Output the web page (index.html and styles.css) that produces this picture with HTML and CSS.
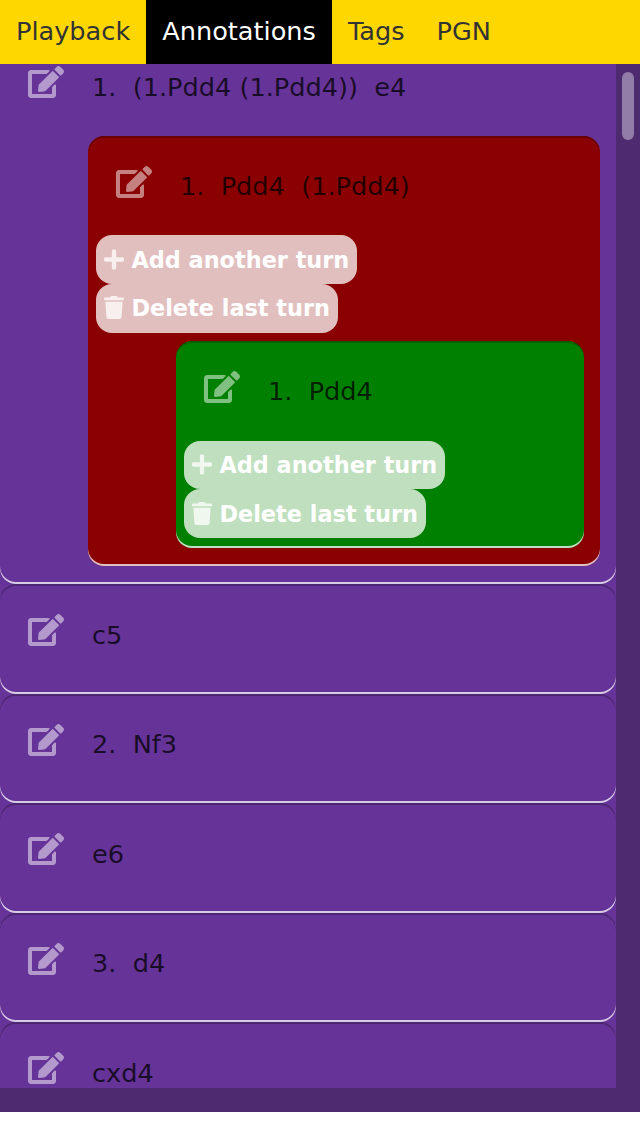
FILE: index.html
```
<!DOCTYPE html>
<html lang="en">
<head>
<meta charset="utf-8">
<title>Annotations</title>
<link rel="stylesheet" href="styles.css">
</head>
<body>
<svg class="defs" aria-hidden="true">
  <symbol id="edit" viewBox="0 0 576 512"><path d="M402.6 83.2l90.2 90.2c3.8 3.8 3.8 10 0 13.8L274.4 405.6l-92.8 10.3c-12.4 1.4-22.9-9.1-21.5-21.5l10.3-92.8L388.8 83.2c3.8-3.8 10-3.8 13.8 0zm162-22.9l-48.8-48.8c-15.2-15.2-39.9-15.2-55.2 0l-35.4 35.4c-3.8 3.8-3.8 10 0 13.8l90.2 90.2c3.8 3.8 10 3.8 13.8 0l35.4-35.4c15.2-15.3 15.2-40 0-55.2zM384 346.2V448H64V128h229.8c3.2 0 6.2-1.3 8.5-3.5l40-40c7.6-7.6 2.2-20.5-8.5-20.5H48C21.5 64 0 85.500 0 112v352c0 26.500 21.500 48 48 48h352c26.500 0 48-21.500 48-48V306.200c0-10.700-12.900-16-20.500-8.500l-40 40c-2.200 2.300-3.500 5.300-3.500 8.500z"/></symbol>
  <symbol id="plus" viewBox="0 0 448 512"><path d="M416 208H272V64c0-17.670-14.330-32-32-32h-32c-17.670 0-32 14.330-32 32v144H32c-17.670 0-32 14.330-32 32v32c0 17.670 14.330 32 32 32h144v144c0 17.670 14.330 32 32 32h32c17.670 0 32-14.330 32-32V304h144c17.670 0 32-14.330 32-32v-32c0-17.670-14.330-32-32-32z"/></symbol>
  <symbol id="trash" viewBox="0 0 448 512"><path d="M432 32H312l-9.400-18.700A24 24 0 0 0 281.100 0H166.800a23.720 23.720 0 0 0-21.400 13.300L136 32H16A16 16 0 0 0 0 48v32a16 16 0 0 0 16 16h416a16 16 0 0 0 16-16V48a16 16 0 0 0-16-16zM53.200 467a48 48 0 0 0 47.900 45h245.800a48 48 0 0 0 47.900-45L416 128H32z"/></symbol>
</svg>
<nav class="tabs">
  <a class="tab">Playback</a><a class="tab active">Annotations</a><a class="tab">Tags</a><a class="tab">PGN</a>
</nav>
<main class="panel">
  <div class="list">
    <section class="turn first">
      <div class="head"><svg class="edit"><use href="#edit"/></svg><span class="move">1.&nbsp; (1.Pdd4 (1.Pdd4))&nbsp; e4</span></div>
      <section class="turn variation red">
        <div class="head"><svg class="edit"><use href="#edit"/></svg><span class="move">1.&nbsp; Pdd4&nbsp; (1.Pdd4)</span></div>
        <div class="actions">
          <button class="action"><svg class="glyph"><use href="#plus"/></svg>Add another turn</button>
          <button class="action"><svg class="glyph trash"><use href="#trash"/></svg>Delete last turn</button>
        </div>
        <section class="turn variation green">
          <div class="head"><svg class="edit"><use href="#edit"/></svg><span class="move">1.&nbsp; Pdd4</span></div>
          <div class="actions">
            <button class="action"><svg class="glyph"><use href="#plus"/></svg>Add another turn</button>
            <button class="action"><svg class="glyph trash"><use href="#trash"/></svg>Delete last turn</button>
          </div>
        </section>
      </section>
    </section>
    <section class="turn row"><div class="head"><svg class="edit"><use href="#edit"/></svg><span class="move">c5</span></div></section>
    <section class="turn row"><div class="head"><svg class="edit"><use href="#edit"/></svg><span class="move">2.&nbsp; Nf3</span></div></section>
    <section class="turn row"><div class="head"><svg class="edit"><use href="#edit"/></svg><span class="move">e6</span></div></section>
    <section class="turn row"><div class="head"><svg class="edit"><use href="#edit"/></svg><span class="move">3.&nbsp; d4</span></div></section>
    <section class="turn row"><div class="head"><svg class="edit"><use href="#edit"/></svg><span class="move">cxd4</span></div></section>
  </div>
  <div class="scrollbar"><div class="thumb"></div></div>
</main>
</body>
</html>
```
FILE: styles.css
```
* { box-sizing: border-box; }
body {
  margin: 0;
  height: 1136px;
  overflow: hidden;
  background: #fff;
  font: 25.6px/32px "DejaVu Sans", sans-serif;
}
.defs { display: none; }
.tabs { display: flex; height: 64px; background: gold; color: #333; }
.tab { padding: 15px 16px 17px; }
.tab.active { background: #000; color: #fff; }
.panel { display: flex; height: 1048px; padding-bottom: 24px; background: #4e2a70; }
.list { width: 616px; height: 1024px; overflow: hidden; background: #639; }
.scrollbar { width: 24px; padding: 8px 6px; }
.thumb { width: 12px; height: 68px; border-radius: 6px; background: #927da8; }
.turn {
  border-radius: 16px;
  box-shadow: inset 0 2px 0 rgba(0, 0, 0, .25), inset 0 -2px 0 rgba(255, 255, 255, .75);
}
.first { margin-top: -28px; height: 548px; padding-right: 16px; }
.row { height: 109.5px; }
.head { display: flex; align-items: flex-start; height: 99.7px; padding: 30px 0 0 28px; }
.edit { width: 36px; height: 32px; fill: rgba(255, 255, 255, .5); }
.move { margin: 4.8px 0 0 28px; color: rgba(0, 0, 0, .75); white-space: nowrap; }
.variation { margin-left: 88px; }
.red { height: 430.4px; padding-right: 16px; background: #8b0000; }
.first > .head { height: 99.6px; }
.green { height: 207.3px; margin-top: 7.7px; background: green; }
.green > .head { height: 100px; }
.actions { display: flex; flex-direction: column; align-items: flex-start; padding-left: 8px; }
.action {
  display: flex;
  align-items: center;
  gap: 7.4px;
  height: 48.8px;
  padding: 0 7.8px 0 8px;
  border: 0;
  border-radius: 16px;
  background: rgba(255, 255, 255, .75);
  color: #fff;
  font: bold 22.4px/32px "DejaVu Sans", sans-serif;
}
.glyph { width: 20px; height: 23px; fill: rgba(255, 255, 255, .75); }
.trash { margin-bottom: 1.2px; }
```
